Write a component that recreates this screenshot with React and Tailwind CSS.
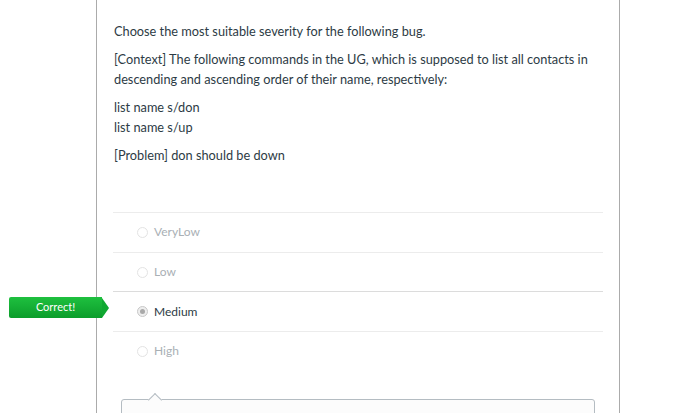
export default function App() {
  const answers = [
    { label: 'VeryLow', checked: false },
    { label: 'Low', checked: false },
    { label: 'Medium', checked: true },
    { label: 'High', checked: false },
  ]

  return (
    <div className="relative h-[413px] w-full overflow-hidden bg-white font-['Lato','Liberation_Sans',sans-serif] text-[#2d3b45]">
      {/* Correct badge */}
      <div className="absolute left-[9px] top-[297px] flex h-[21px] items-center">
        <div className="flex h-full w-[93px] items-center justify-center rounded-l-[2px] bg-gradient-to-b from-[#1ec03f] to-[#0b9d2b] text-[11px] text-white">
          Correct!
        </div>
        <div className="h-0 w-0 border-y-[10.5px] border-l-[7px] border-y-transparent border-l-[#10a832]" />
      </div>

      <div className="ml-[96px] h-full w-[524px] border-x border-[#ababab]">
        {/* Question text */}
        <div className="space-y-[8px] pl-[17px] pr-[20px] pt-[21px] text-[12.75px] leading-[20px]">
          <p>Choose the most suitable severity for the following bug.</p>
          <p>
            [Context] The following commands in the UG, which is supposed to list all contacts in
            descending and ascending order of their name, respectively:
          </p>
          <p>
            list name s/don
            <br />
            list name s/up
          </p>
          <p>[Problem] don should be down</p>
        </div>

        {/* Answers */}
        <div className="ml-[16px] mt-[47px] w-[490px]">
          {answers.map((a, i) => (
            <div
              key={a.label}
              className={`flex h-[39.7px] items-center border-t pl-[24px] ${
                i === 2 ? 'border-[#dcdcdc]' : 'border-[#ececec]'
              }`}
            >
              <span
                className={`flex h-[11px] w-[11px] items-center justify-center rounded-full border ${
                  a.checked ? 'border-[#c8c8c8] bg-[#eeeeee]' : 'border-[#e3e3e3] bg-white'
                }`}
              >
                {a.checked && <span className="h-[5px] w-[5px] rounded-full bg-[#a9a9a9]" />}
              </span>
              <span
                className={`ml-[6px] text-[12px] ${a.checked ? 'text-[#2d3b45]' : 'text-[#a9b0b5]'}`}
              >
                {a.label}
              </span>
            </div>
          ))}
        </div>

        {/* Comment box */}
        <div className="relative ml-[24px] mt-[28px] h-[40px] w-[474px] rounded-[3px] border border-[#b4bcc2] bg-[#fcfcfc]">
          <div className="absolute left-[28px] top-[-5px] h-[10px] w-[10px] rotate-45 border-l border-t border-[#b4bcc2] bg-[#fcfcfc]" />
        </div>
      </div>
    </div>
  )
}
